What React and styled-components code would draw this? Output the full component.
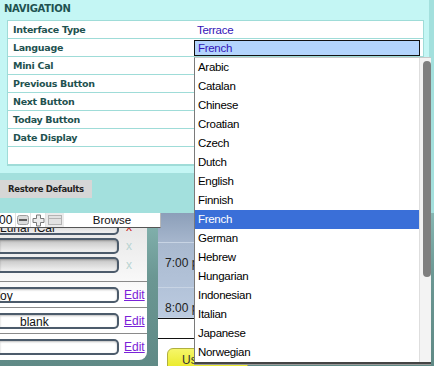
import styled, { createGlobalStyle } from "styled-components";

const GlobalStyle = createGlobalStyle`
	body {
		margin: 0;
		font-family: "Liberation Sans", Arial, sans-serif;
	}
`;

const settings = [
	{ label: "Interface Type", value: "Terrace" },
	{ label: "Language", value: "French", select: true },
	{ label: "Mini Cal" },
	{ label: "Previous Button" },
	{ label: "Next Button" },
	{ label: "Today Button" },
	{ label: "Date Display" },
	{ label: "" },
];

const languages = [
	"Arabic",
	"Catalan",
	"Chinese",
	"Croatian",
	"Czech",
	"Dutch",
	"English",
	"Finnish",
	"French",
	"German",
	"Hebrew",
	"Hungarian",
	"Indonesian",
	"Italian",
	"Japanese",
	"Norwegian",
];

const feeds = [
	{ text: "Lunar iCal", locked: true, mark: "red" },
	{ text: "", locked: true, mark: "grey" },
	{ text: "", locked: true, mark: "grey" },
	{ text: "oy", edit: true, divider: true, first: true },
	{ text: "blank", indent: 20, edit: true, divider: true },
	{ text: "", edit: true, divider: true },
];

export default function App() {
	return (
		<>
			<GlobalStyle />
			<Screen>
				<Settings>
					<NavPanel>
						<Heading>NAVIGATION</Heading>
						<Table>
							{settings.map((row, i) => (
								<Row key={i}>
									<Label>{row.label}</Label>
									<Value>
										{row.select ? <SelectBox>{row.value}</SelectBox> : row.value}
									</Value>
								</Row>
							))}
						</Table>
					</NavPanel>
					<Footer>
						<RestoreButton>Restore Defaults</RestoreButton>
					</Footer>
				</Settings>

				<Toolbar>
					<Zoom>00</Zoom>
					<ToolIcon>
						<svg width="12" height="10" viewBox="0 0 12 10">
							<rect x="0.5" y="0.5" width="11" height="9" rx="2" fill="#dcdcdc" stroke="#a0a0a0" />
							<rect x="2" y="4" width="8" height="2" fill="#5e5e5e" />
						</svg>
					</ToolIcon>
					<ToolIcon>
						<svg width="13" height="13" viewBox="0 0 13 13">
							<path d="M4.5 1h4v3.5H12v4H8.5V12h-4V8.5H1v-4h3.5z" fill="#ececec" stroke="#7a7a7a" />
						</svg>
					</ToolIcon>
					<ToolIconBox>
						<svg width="14" height="10" viewBox="0 0 14 10">
							<rect x="0.5" y="0.5" width="13" height="9" fill="#e2e2e2" stroke="#b4b4b4" />
							<line x1="1" y1="3.5" x2="13" y2="3.5" stroke="#b4b4b4" />
						</svg>
					</ToolIconBox>
					<BrowseLabel>Browse</BrowseLabel>
				</Toolbar>

				<Scene>
					<EditorPanel>
						{feeds.map((feed, i) => (
							<FeedRow key={i} $divider={feed.divider} $first={feed.first}>
								<FeedInput $locked={feed.locked} $indent={feed.indent || 0}>
									{feed.text}
								</FeedInput>
								{feed.edit ? <EditLink>Edit</EditLink> : <Remove $mark={feed.mark}>x</Remove>}
							</FeedRow>
						))}
					</EditorPanel>
					<Calendar>
						<TimeSlot $h={30} $bg="linear-gradient(#8c9fb9, #a6b6cd)" />
						<TimeSlot $h={45} $bg="linear-gradient(#a9b9cf, #b3c3d9)">7:00 p</TimeSlot>
						<TimeSlot $h={30} $bg="linear-gradient(#b3c3d9, #bccbe0)">8:00 p</TimeSlot>
						<Blank />
						<ButtonArea>
							<UseButton>Use</UseButton>
						</ButtonArea>
					</Calendar>
				</Scene>

				<Dropdown>
					<Options>
						{languages.map((lang) => (
							<Option key={lang} $active={lang === "French"}>
								{lang}
							</Option>
						))}
					</Options>
					<Track>
						<Thumb />
					</Track>
				</Dropdown>
			</Screen>
		</>
	);
}

const Screen = styled.div`
	position: relative;
	width: 434px;
	height: 366px;
	overflow: hidden;
	background-color: #a3e0dd;
	display: flex;
	flex-direction: column;
`;

const Settings = styled.div`
	background-color: #a3e0dd;
	display: flex;
	flex-direction: column;
`;

const NavPanel = styled.div`
	height: 173px;
	margin-right: 5px;
	background-color: #c4f6f4;
	box-sizing: border-box;
`;

const Heading = styled.h2`
	margin: 0;
	height: 20px;
	padding: 3px 0 0 4px;
	box-sizing: border-box;
	font-family: "DejaVu Sans", Verdana, sans-serif;
	font-size: 10px;
	font-weight: 700;
	letter-spacing: -0.3px;
	line-height: 11px;
	color: #1f5250;
`;

const Table = styled.div`
	margin-left: 7px;
	width: 417px;
	background-color: #ffffff;
	border: 1px solid #9fdcd8;
	box-sizing: border-box;
`;

const Row = styled.div`
	display: grid;
	grid-template-columns: 186px 1fr;
	height: 18px;
	border-bottom: 1px solid #9fdcd8;
	box-sizing: border-box;
	align-items: center;
`;

const Label = styled.span`
	padding-left: 5px;
	font-family: "DejaVu Sans", Verdana, sans-serif;
	font-size: 9.5px;
	font-weight: 700;
	letter-spacing: -0.3px;
	color: #1f5250;
`;

const Value = styled.span`
	padding-left: 3px;
	font-size: 11.5px;
	letter-spacing: -0.3px;
	color: #3414b8;
	display: flex;
	align-items: center;
`;

const SelectBox = styled.div`
	margin-left: -3px;
	width: 226px;
	height: 16px;
	box-sizing: border-box;
	padding-left: 3px;
	background-color: #b3d4fc;
	border: 1px solid #111111;
	line-height: 14px;
	color: #3414b8;
`;

const Footer = styled.div`
	height: 40px;
	padding-top: 7px;
	box-sizing: border-box;
`;

const RestoreButton = styled.div`
	width: 92px;
	height: 18px;
	box-sizing: border-box;
	padding-left: 8px;
	background-color: #d6d6d6;
	font-family: "DejaVu Sans", Verdana, sans-serif;
	font-size: 8.5px;
	font-weight: 700;
	letter-spacing: -0.3px;
	line-height: 18px;
	color: #222222;
`;

const Toolbar = styled.div`
	position: relative;
	z-index: 2;
	width: 161px;
	height: 15px;
	box-sizing: border-box;
	display: flex;
	align-items: stretch;
	background-color: #ffffff;
	border-right: 1px solid #b8b8b8;
	border-bottom: 1px solid #555555;
	font-size: 12px;
	color: #111111;
`;

const Zoom = styled.span`
	width: 16px;
	margin-left: -1px;
	line-height: 14px;
	border-right: 1px solid #e2e2e2;
`;

const ToolIcon = styled.span`
	width: 14px;
	display: flex;
	align-items: center;
	justify-content: center;
	border-right: 1px solid #e2e2e2;
`;

const ToolIconBox = styled.span`
	width: 18px;
	background-color: #ebebeb;
	display: flex;
	align-items: center;
	justify-content: center;
`;

const BrowseLabel = styled.span`
	flex: 1;
	text-align: center;
	font-size: 11.5px;
	line-height: 14px;
`;

const Scene = styled.div`
	flex: 1;
	margin-top: -15px;
	display: flex;
	background: linear-gradient(#86b6b2, #6b9793 40%, #5f8985);
`;

const EditorPanel = styled.div`
	width: 147px;
	height: 147px;
	padding-top: 4px;
	box-sizing: border-box;
	border-bottom-right-radius: 8px;
	background: linear-gradient(to bottom, #e2e2e2, #ffffff 60%);
	display: flex;
	flex-direction: column;
`;

const FeedRow = styled.div`
	display: flex;
	align-items: center;
	gap: 5px;
	height: ${(p) => (p.$divider ? "26px" : "19px")};
	margin-top: ${(p) => (p.$first ? "7px" : "0")};
	border-top: ${(p) => (p.$divider ? "1px solid #8a8a8a" : "none")};
	box-sizing: border-box;
`;

const FeedInput = styled.div`
	width: 119px;
	height: 16px;
	box-sizing: border-box;
	padding-left: ${(p) => p.$indent}px;
	border: 2px solid #4c5b6b;
	border-left: none;
	border-radius: 0 5px 5px 0;
	background: ${(p) => (p.$locked ? "linear-gradient(#c4c4c4, #f2f2f2)" : "#ffffff")};
	box-shadow: inset 0 1px 2px rgba(0, 0, 0, 0.25);
	font-size: 12px;
	line-height: 14px;
	color: #111111;
	white-space: nowrap;
	overflow: hidden;
`;

const Remove = styled.span`
	margin-left: 2px;
	font-size: 12px;
	line-height: 12px;
	color: ${(p) => (p.$mark === "red" ? "#cc2222" : "#b9d4d2")};
`;

const EditLink = styled.span`
	font-size: 12px;
	color: #7a22d8;
	text-decoration: underline;
`;

const Calendar = styled.div`
	margin-left: 11px;
	width: 90px;
	display: flex;
	flex-direction: column;
	background-color: #ffffff;
`;

const TimeSlot = styled.div`
	height: ${(p) => p.$h}px;
	box-sizing: border-box;
	padding: 13px 0 0 7px;
	background: ${(p) => p.$bg};
	border-bottom: 1px solid #c8d4e4;
	font-size: 12px;
	color: #222222;
`;

const Blank = styled.div`
	height: 19px;
	border-top: 1px solid #111111;
	border-bottom: 1px solid #111111;
	background-color: #ffffff;
`;

const ButtonArea = styled.div`
	flex: 1;
	padding: 9px 0 0 9px;
`;

const UseButton = styled.div`
	height: 22px;
	padding-left: 14px;
	border: 1px solid #b0b040;
	border-radius: 6px;
	background: linear-gradient(#f6f66a, #e8e81c);
	font-size: 12px;
	line-height: 22px;
	color: #333333;
`;

const Dropdown = styled.div`
	position: absolute;
	z-index: 5;
	left: 194px;
	top: 57px;
	width: 237px;
	height: 307px;
	box-sizing: border-box;
	display: flex;
	background-color: #ffffff;
	border-left: 1px solid #7a7a7a;
	border-top: 1px solid #c8c8c8;
	border-bottom: 2px solid #444444;
	box-shadow: 0 1px 0 #999999;
`;

const Options = styled.div`
	flex: 1;
	display: flex;
	flex-direction: column;
`;

const Option = styled.div`
	height: 19px;
	padding-left: 3px;
	font-size: 11.5px;
	letter-spacing: -0.3px;
	line-height: 19px;
	color: ${(p) => (p.$active ? "#ffffff" : "#000000")};
	background-color: ${(p) => (p.$active ? "#3a6fd8" : "transparent")};
`;

const Track = styled.div`
	width: 12px;
	padding: 3px 0 0 3px;
	box-sizing: border-box;
	background-color: #f3f3f3;
	border-left: 1px solid #dedede;
`;

const Thumb = styled.div`
	width: 8px;
	height: 216px;
	border-radius: 4px;
	background-color: #7f7f7f;
`;
